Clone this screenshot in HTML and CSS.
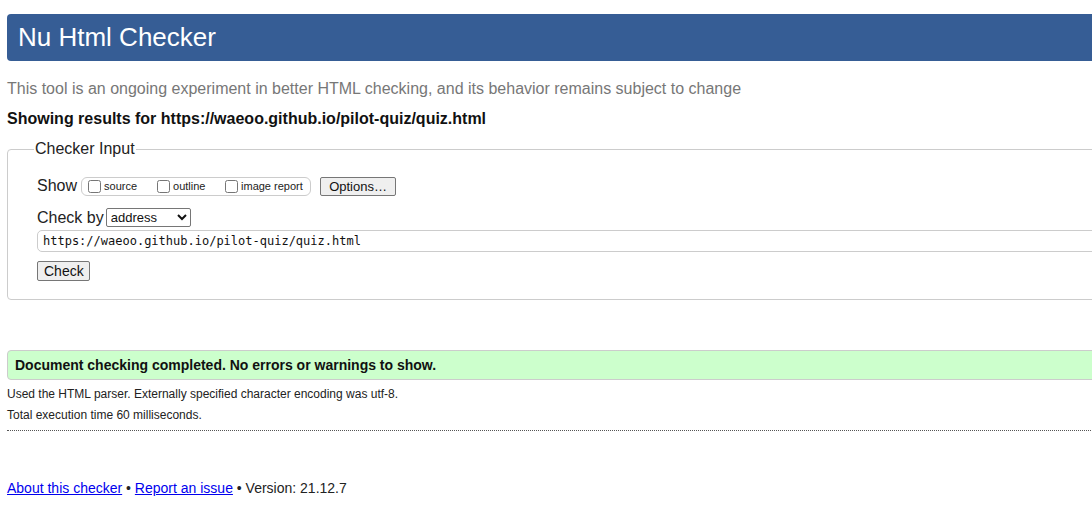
FILE: index.html
```html
<!DOCTYPE html>
<html lang="en">
<head>
<meta charset="utf-8">
<title>Nu Html Checker</title>
<link rel="stylesheet" href="styles.css">
</head>
<body>
<div class="page">
  <h1 class="title">Nu Html Checker</h1>
  <p class="intro">This tool is an ongoing experiment in better HTML checking, and its behavior remains subject to change</p>
  <p class="showing">Showing results for https://waeoo.github.io/pilot-quiz/quiz.html</p>
  <fieldset class="input-box">
    <legend class="legend">Checker Input</legend>
    <div class="row show-row">
      <span class="label">Show</span>
      <span class="opts">
        <label class="opt"><input type="checkbox" class="cb"><span>source</span></label>
        <label class="opt"><input type="checkbox" class="cb"><span>outline</span></label>
        <label class="opt"><input type="checkbox" class="cb"><span>image report</span></label>
      </span>
      <button class="btn options">Options…</button>
    </div>
    <div class="row by-row">
      <span class="label">Check by</span>
      <select class="sel"><option>address</option></select>
    </div>
    <div class="url">https://waeoo.github.io/pilot-quiz/quiz.html</div>
    <button class="btn check">Check</button>
  </fieldset>
  <div class="success">Document checking completed. No errors or warnings to show.</div>
  <p class="details">Used the HTML parser. Externally specified character encoding was utf-8.</p>
  <p class="details">Total execution time 60 milliseconds.</p>
  <hr class="dots">
  <p class="footer"><a href="#">About this checker</a> • <a href="#">Report an issue</a> • Version: 21.12.7</p>
</div>
</body>
</html>
```

FILE: styles.css
```css
html { overflow: hidden; background: #fff; }
body {
  margin: 0;
  font-family: "Liberation Sans", Arial, sans-serif;
  color: #222;
}
.page {
  width: 1120px;
  padding: 14px 0 0 7px;
}
.title {
  margin: 0;
  background: #365d95;
  color: #fff;
  font-weight: normal;
  font-size: 26px;
  line-height: 47px;
  height: 47px;
  padding-left: 11px;
  border-radius: 4px;
}
.intro {
  margin: 18px 0 0;
  font-size: 16px;
  line-height: 20px;
  color: #777;
}
.showing {
  margin: 10px 0 0;
  font-size: 16px;
  line-height: 20px;
  font-weight: bold;
  color: #111;
}
.input-box {
  margin: 11px 0 0;
  border: 1px solid #ccc;
  border-radius: 4px;
  padding: 15px 0 18px 29px;
}
.legend {
  font-size: 16px;
  color: #222;
  padding: 0 1px;
  margin-left: -3px;
}
.row {
  display: flex;
  align-items: center;
}
.label { font-size: 16px; }
.show-row { height: 20px; margin-top: 3px; }
.opts {
  display: flex;
  align-items: center;
  margin-left: 4px;
  border: 1px solid #ccc;
  border-radius: 6px;
  height: 17px;
  width: 222px;
  padding-left: 6px;
  font-size: 11px;
}
.opt { display: flex; align-items: center; }
.opt span { margin-left: 3px; }
.opt:nth-child(1) { width: 69px; }
.opt:nth-child(2) { width: 68px; }
.cb {
  margin: 0;
  width: 13px;
  height: 13px;
}
.btn {
  font-family: "Liberation Sans", Arial, sans-serif;
  font-size: 13px;
  color: #111;
  background: #efefef;
  border: 1px solid #767676;
  border-radius: 2px;
  padding: 0 6px;
  height: 19px;
}
.options { margin-left: 9px; width: 76px; }
.by-row { margin-top: 12px; }
.sel {
  margin-left: 2px;
  font-family: "Liberation Sans", Arial, sans-serif;
  font-size: 13px;
  height: 19px;
  width: 85px;
  border: 1px solid #767676;
  border-radius: 2px;
  background: #fff;
  color: #111;
}
.url {
  margin-top: 3px;
  border: 1px solid #ccc;
  border-radius: 5px;
  height: 20px;
  line-height: 20px;
  padding-left: 5px;
  font-family: "DejaVu Sans Mono", "Liberation Mono", monospace;
  font-size: 12px;
  color: #111;
}
.check { margin-top: 9px; width: 53px; font-size: 14px; height: 20px; }
.success {
  margin-top: 50px;
  background: #ccffcc;
  border: 1px solid #ccc;
  border-radius: 4px;
  height: 28px;
  line-height: 28px;
  padding-left: 7px;
  font-weight: bold;
  font-size: 14px;
  color: #111;
}
.details {
  margin: 7px 0 0;
  font-size: 12px;
  line-height: 15px;
  color: #222;
}
.details + .details { margin-top: 6px; }
.dots {
  margin: 7px 0 0;
  border: 0;
  border-top: 1px dotted #555;
  height: 0;
}
.footer {
  margin: 48px 0 0;
  font-size: 14px;
  line-height: 18px;
  color: #222;
}
.footer a { color: #00e; }
```
